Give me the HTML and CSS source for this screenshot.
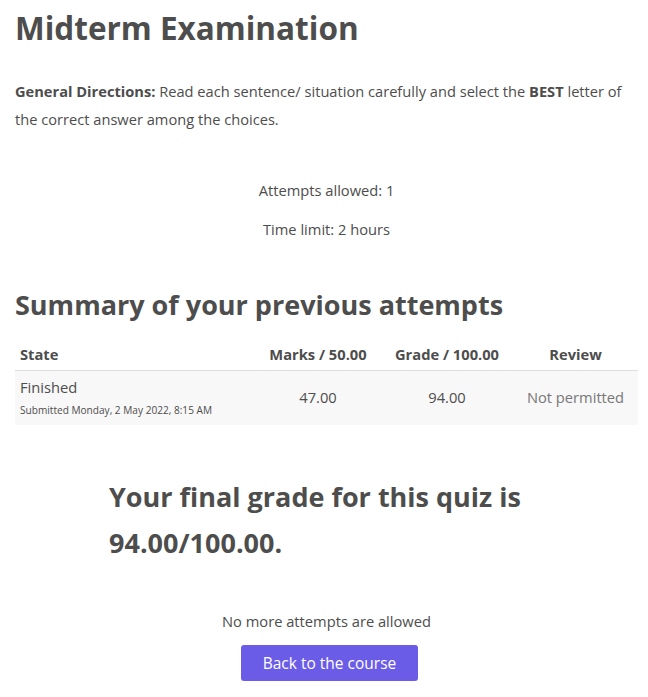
FILE: index.html
```html
<!DOCTYPE html>
<html>
<head>
<meta charset="utf-8">
<link rel="stylesheet" href="styles.css">
</head>
<body>
<div class="page">
  <h2 class="title">Midterm Examination</h2>
  <div class="intro">
    <p><strong>General Directions:</strong> Read each sentence/ situation carefully and select the <strong>BEST</strong> letter of the correct answer among the choices.</p>
  </div>
  <div class="info">
    <p>Attempts allowed: 1</p>
    <p>Time limit: 2 hours</p>
  </div>
  <h3 class="summary">Summary of your previous attempts</h3>
  <table class="attempts">
    <colgroup>
      <col class="w-state">
      <col class="w-marks">
      <col class="w-grade">
      <col class="w-review">
    </colgroup>
    <thead>
      <tr>
        <th class="c-state">State</th>
        <th class="c-num">Marks / 50.00</th>
        <th class="c-num">Grade / 100.00</th>
        <th class="c-num">Review</th>
      </tr>
    </thead>
    <tbody>
      <tr>
        <td class="c-state">Finished<span class="submitted">Submitted Monday, 2 May 2022, 8:15 AM</span></td>
        <td class="c-num">47.00</td>
        <td class="c-num">94.00</td>
        <td class="c-num muted">Not permitted</td>
      </tr>
    </tbody>
  </table>
  <div class="feedback">
    <h3 class="final">Your final grade for this quiz is 94.00/100.00.</h3>
  </div>
  <div class="actions">
    <p>No more attempts are allowed</p>
    <button class="btn">Back to the course</button>
  </div>
</div>
</body>
</html>
```

FILE: styles.css
```css
html, body {
  margin: 0;
  padding: 0;
  background: #fff;
}
body {
  font-family: "Open Sans", "Liberation Sans", sans-serif;
  font-size: 14.7px;
  color: #4d4d4d;
}
.page {
  padding: 0 10px 0 15px;
}
.title {
  margin: 0;
  padding-top: 8px;
  font-size: 31.5px;
  font-weight: 700;
  line-height: 40px;
}
.intro {
  margin-top: 29px;
}
.intro p {
  margin: 0;
  font-size: 14.65px;
  line-height: 28px;
}
.info {
  margin-top: 46px;
  text-align: center;
}
.info p {
  margin: 0 0 17px;
  line-height: 22px;
}
.summary {
  margin: 47px 0 0;
  font-size: 27px;
  font-weight: 700;
  line-height: 36px;
}
.attempts {
  margin-top: 15px;
  width: 100%;
  border-collapse: collapse;
  table-layout: fixed;
}
.w-state { width: 240px; }
.w-marks { width: 126px; }
.w-grade { width: 132px; }
.w-review { width: 125px; }
.attempts th {
  font-weight: 700;
  padding: 6px 5px;
  line-height: 20px;
  border-bottom: 1px solid #dedede;
  white-space: nowrap;
}
.attempts td {
  background: #f8f8f8;
  padding: 6px 5px 8px;
  vertical-align: middle;
  white-space: nowrap;
}
.c-state {
  text-align: left;
}
.c-num {
  text-align: center;
}
.submitted {
  display: block;
  font-size: 10.1px;
  line-height: 14px;
  margin-top: 6px;
}
.attempts td.c-state {
  line-height: 20px;
}
.muted {
  color: #777;
}
.feedback {
  width: 435px;
  margin: 49px auto 0;
}
.final {
  margin: 0;
  font-size: 27px;
  font-weight: 700;
  line-height: 46px;
}
.actions {
  margin-top: 44px;
  text-align: center;
}
.actions p {
  margin: 0 0 13px;
  line-height: 22px;
}
.btn {
  font-family: inherit;
  font-size: 15.5px;
  color: #fff;
  background: #6b5ce7;
  border: 0;
  border-radius: 3px;
  padding: 0 22px;
  height: 36px;
  margin-left: 6px;
}
```
